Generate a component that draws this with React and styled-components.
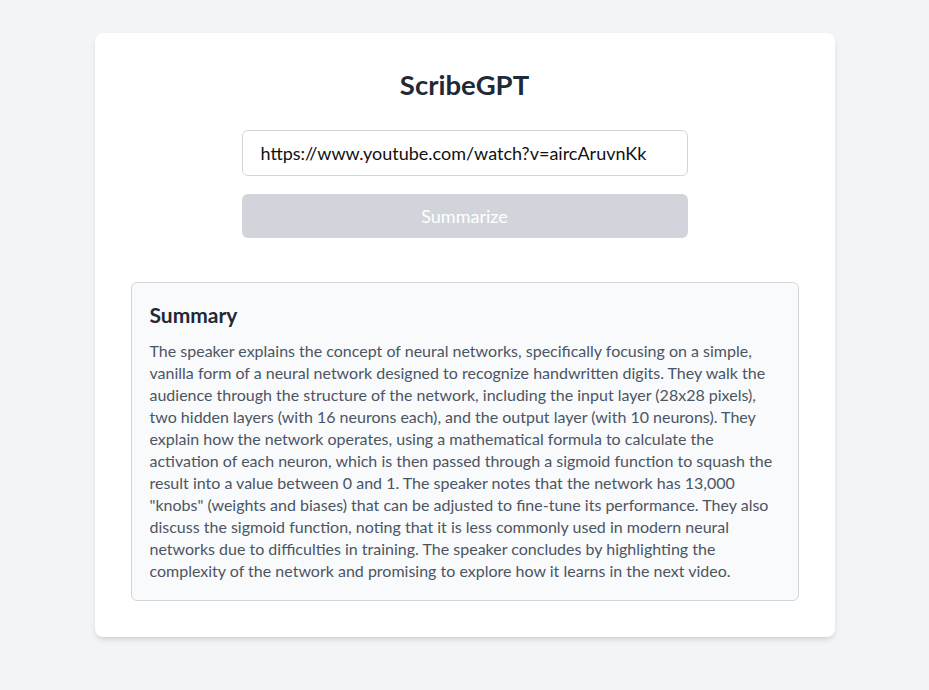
import React from 'react';
import styled, { createGlobalStyle } from 'styled-components';

const GlobalStyle = createGlobalStyle`
  html, body {
    margin: 0;
    padding: 0;
    background: #f3f4f6;
    font-family: "Lato", "Noto Sans", sans-serif;
  }
`;

const Page = styled.div`
  min-height: 690px;
  padding-top: 33px;
  box-sizing: border-box;
`;

const Card = styled.div`
  width: 740px;
  margin: 0 auto;
  background: #fff;
  border-radius: 8px;
  box-shadow: 0 4px 6px -1px rgba(0, 0, 0, 0.1), 0 2px 4px -2px rgba(0, 0, 0, 0.1);
  padding: 36px 36px 36px;
  box-sizing: border-box;
  display: flex;
  flex-direction: column;
  align-items: center;
`;

const Title = styled.h1`
  margin: 0 0 29px;
  font-size: 27.5px;
  line-height: 32px;
  font-weight: 700;
  color: #1f2937;
`;

const Form = styled.div`
  width: 446px;
  display: flex;
  flex-direction: column;
  gap: 18px;
  margin-bottom: 44px;
`;

const UrlInput = styled.input`
  height: 46px;
  box-sizing: border-box;
  border: 1px solid #d1d5db;
  border-radius: 6px;
  padding: 0 18px;
  font-family: inherit;
  font-size: 18px;
  color: #111;
  outline: none;
`;

const Button = styled.button`
  height: 44px;
  border: none;
  border-radius: 6px;
  background: #d1d5db;
  color: #fff;
  font-family: inherit;
  font-size: 18px;
  cursor: not-allowed;
`;

const SummaryBox = styled.section`
  align-self: stretch;
  background: #f9fafb;
  border: 1px solid #d1d5db;
  border-radius: 6px;
  padding: 18px;
`;

const SummaryTitle = styled.h2`
  margin: 0 0 11px;
  font-size: 21px;
  line-height: 28px;
  font-weight: 700;
  color: #1f2937;
`;

const Text = styled.p`
  margin: 0;
  font-size: 16px;
  line-height: 22px;
  color: #4b5563;
`;

const Line = styled.span`
  display: block;
  white-space: nowrap;
`;

const lines = [
  'The speaker explains the concept of neural networks, specifically focusing on a simple,',
  'vanilla form of a neural network designed to recognize handwritten digits. They walk the',
  'audience through the structure of the network, including the input layer (28x28 pixels),',
  'two hidden layers (with 16 neurons each), and the output layer (with 10 neurons). They',
  'explain how the network operates, using a mathematical formula to calculate the',
  'activation of each neuron, which is then passed through a sigmoid function to squash the',
  'result into a value between 0 and 1. The speaker notes that the network has 13,000',
  '"knobs" (weights and biases) that can be adjusted to fine-tune its performance. They also',
  'discuss the sigmoid function, noting that it is less commonly used in modern neural',
  'networks due to difficulties in training. The speaker concludes by highlighting the',
  'complexity of the network and promising to explore how it learns in the next video.',
];

export default function App() {
  return (
    <Page>
      <GlobalStyle />
      <Card>
        <Title>ScribeGPT</Title>
        <Form>
          <UrlInput defaultValue="https://www.youtube.com/watch?v=aircAruvnKk" />
          <Button disabled>Summarize</Button>
        </Form>
        <SummaryBox>
          <SummaryTitle>Summary</SummaryTitle>
          <Text>
            {lines.map((l, i) => (
              <Line key={i}>{l}</Line>
            ))}
          </Text>
        </SummaryBox>
      </Card>
    </Page>
  );
}
